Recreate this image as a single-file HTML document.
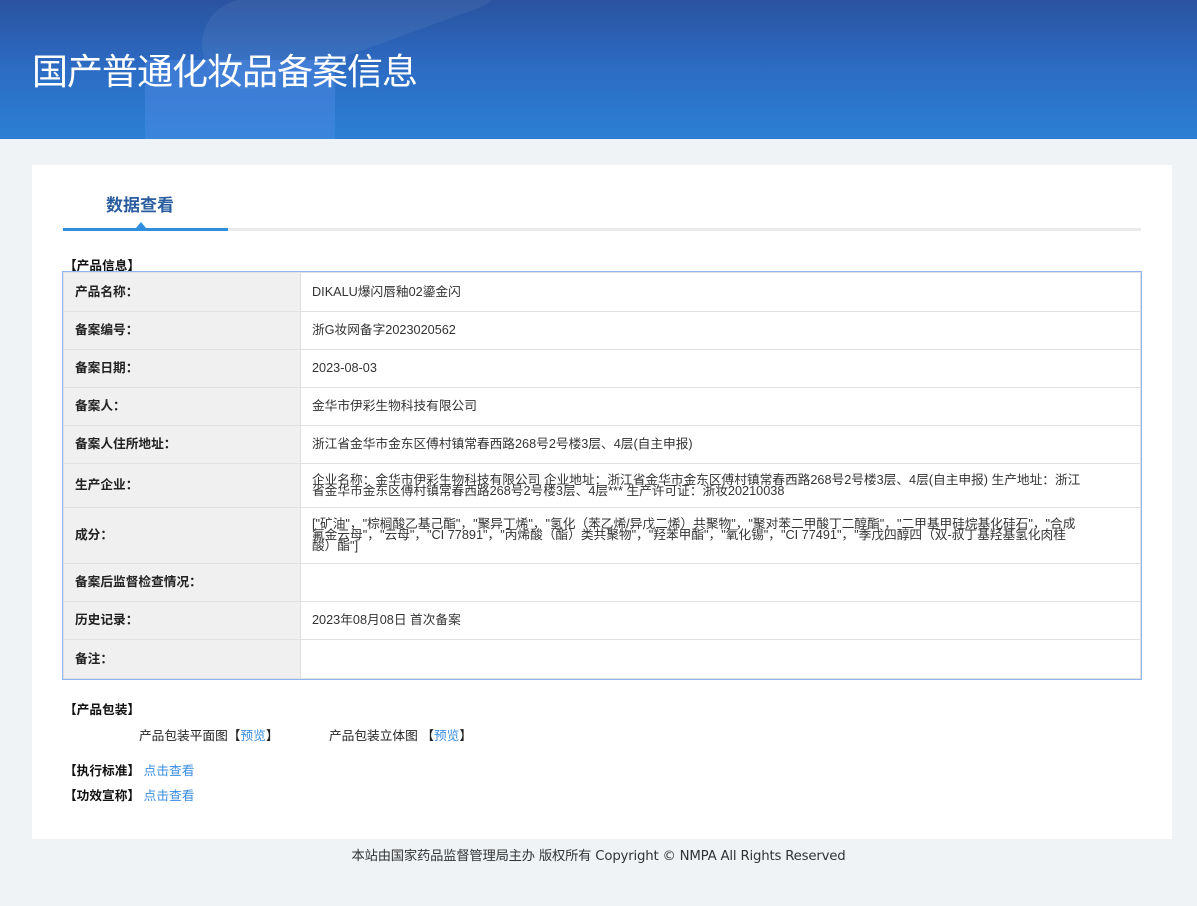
<!DOCTYPE html>
<html><head><meta charset="utf-8"><style>
*{margin:0;padding:0;box-sizing:border-box}
body{width:1197px;height:906px;background:#eff3f6;font-family:"Liberation Sans","Noto Sans CJK SC",sans-serif;font-size:12.7px;color:#333;position:relative;overflow:hidden}
.hd{position:absolute;left:0;top:0;width:1197px;height:139px;background:linear-gradient(180deg,#2a53a0 0%,#2c6cc4 50%,#2b80d4 100%);overflow:hidden}
.hd h1{position:absolute;left:32px;top:46px;font-size:36px;font-weight:normal;color:#fff;letter-spacing:-1px;font-family:"Noto Sans CJK SC",sans-serif;line-height:46px}
.deco1{position:absolute;left:145px;top:60px;width:190px;height:90px;background:rgba(80,140,230,.45)}
.deco2{position:absolute;left:195px;top:-40px;width:320px;height:90px;border-radius:45px;background:rgba(255,255,255,.06);transform:rotate(-20deg)}
.card{position:absolute;left:32px;top:165px;width:1140px;height:674px;background:#fff}
.tab{position:absolute;left:74px;top:26px;font-size:17px;font-weight:bold;color:#2a5d9f;font-family:"Noto Sans CJK SC",sans-serif}
.line{position:absolute;left:31px;top:63px;width:1078px;height:3px;background:#e8eaec}
.line i{position:absolute;left:0;top:0;width:165px;height:3px;background:#2f8ee0}
.tri{position:absolute;left:104px;top:57px;width:0;height:0;border-left:5px solid transparent;border-right:5px solid transparent;border-bottom:6px solid #2f8ee0}
.sec{position:absolute;left:32px;font-weight:bold;color:#111;font-size:12.7px}
table{position:absolute;left:31px;top:107px;width:1078px;border-collapse:collapse;outline:1px solid #8fb4ee}
td{border:1px solid #e0e0e0;font-size:12.7px;line-height:11px;vertical-align:middle}
td.l{width:237px;background:#f0f0f0;font-weight:bold;color:#222;padding-left:11px}
td.v{padding-left:11px;padding-right:55px;color:#333}
a{color:#3a8ee0;text-decoration:none}
.ft{position:absolute;top:845px;left:0;width:1197px;text-align:center;font-size:13.3px;color:#333;font-family:"DejaVu Sans","Noto Sans CJK SC",sans-serif;letter-spacing:-0.2px}
</style></head><body>
<div class="hd"><div class="deco2"></div><div class="deco1"></div><h1>国产普通化妆品备案信息</h1></div>
<div class="card">
<div class="tab">数据查看</div>
<div class="line"><i></i></div><div class="tri"></div>
<div class="sec" style="top:90px">【产品信息】</div>
<table>
<tr style="height:39px"><td class="l">产品名称：</td><td class="v">DIKALU爆闪唇釉02鎏金闪</td></tr>
<tr style="height:38px"><td class="l">备案编号：</td><td class="v">浙G妆网备字2023020562</td></tr>
<tr style="height:38px"><td class="l">备案日期：</td><td class="v">2023-08-03</td></tr>
<tr style="height:38px"><td class="l">备案人：</td><td class="v">金华市伊彩生物科技有限公司</td></tr>
<tr style="height:38px"><td class="l">备案人住所地址：</td><td class="v">浙江省金华市金东区傅村镇常春西路268号2号楼3层、4层(自主申报)</td></tr>
<tr style="height:44px"><td class="l">生产企业：</td><td class="v">企业名称：金华市伊彩生物科技有限公司 企业地址：浙江省金华市金东区傅村镇常春西路268号2号楼3层、4层(自主申报) 生产地址：浙江<br>省金华市金东区傅村镇常春西路268号2号楼3层、4层*** 生产许可证：浙妆20210038</td></tr>
<tr style="height:56px"><td class="l">成分：</td><td class="v">["矿油"，"棕榈酸乙基己酯"，"聚异丁烯"，"氢化（苯乙烯/异戊二烯）共聚物"，"聚对苯二甲酸丁二醇酯"，"二甲基甲硅烷基化硅石"，"合成<br>氟金云母"，"云母"，"CI 77891"，"丙烯酸（酯）类共聚物"，"羟苯甲酯"，"氧化锡"，"CI 77491"，"季戊四醇四（双-叔丁基羟基氢化肉桂<br>酸）酯"]</td></tr>
<tr style="height:38px"><td class="l">备案后监督检查情况：</td><td class="v"></td></tr>
<tr style="height:38px"><td class="l">历史记录：</td><td class="v">2023年08月08日 首次备案</td></tr>
<tr style="height:39px"><td class="l">备注：</td><td class="v"></td></tr>
</table>
<div class="sec" style="top:534px">【产品包装】</div>
<div style="position:absolute;left:107px;top:560px;color:#222">产品包装平面图【<a>预览</a>】</div>
<div style="position:absolute;left:297px;top:560px;color:#222">产品包装立体图 【<a>预览</a>】</div>
<div class="sec" style="top:595px">【执行标准】 <a style="font-weight:normal">点击查看</a></div>
<div class="sec" style="top:620px">【功效宣称】 <a style="font-weight:normal">点击查看</a></div>
</div>
<div class="ft">本站由国家药品监督管理局主办 版权所有 Copyright © NMPA All Rights Reserved</div>
</body></html>
